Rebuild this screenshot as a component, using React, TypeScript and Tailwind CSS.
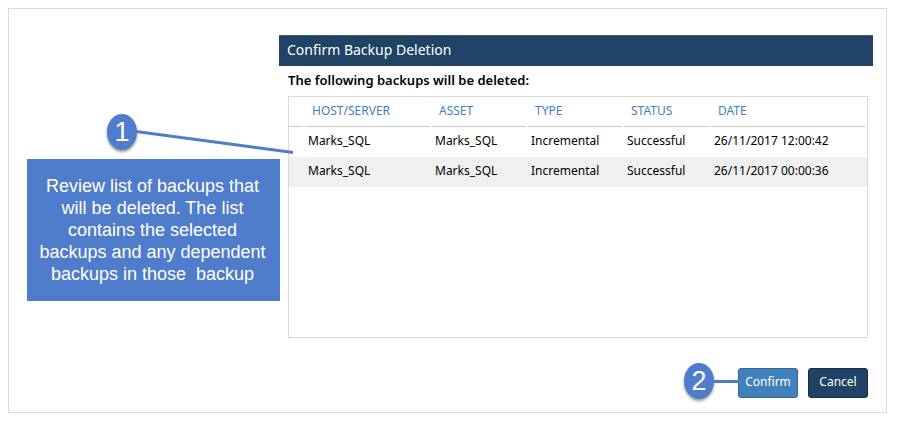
import { ReactNode } from 'react';
import clsx from 'clsx';

type Backup = {
  host: string;
  asset: string;
  type: string;
  status: string;
  date: string;
};

const backups: Backup[] = [
  { host: 'Marks_SQL', asset: 'Marks_SQL', type: 'Incremental', status: 'Successful', date: '26/11/2017 12:00:42' },
  { host: 'Marks_SQL', asset: 'Marks_SQL', type: 'Incremental', status: 'Successful', date: '26/11/2017 00:00:36' },
];

const columns = [
  { label: 'Host/Server', width: 'w-[127px]' },
  { label: 'Asset', width: 'w-24' },
  { label: 'Type', width: 'w-24' },
  { label: 'Status', width: 'w-[87px]' },
  { label: 'Date', width: '' },
];

const StepMarker = ({ children }: { children: ReactNode }) => (
  <span className="flex h-9 w-[30px] items-center justify-center rounded-[50%] bg-[#4f7dcb] font-['Liberation_Sans',sans-serif] text-[27px] leading-9 text-white shadow-[0_2px_3px_rgba(0,0,0,0.4)]">
    {children}
  </span>
);

const BackupTable = () => (
  <table className="w-full table-fixed border-collapse text-left text-xs">
    <thead>
      <tr>
        <th className="w-4 p-0">
          <div className="mr-0.5 h-[30px] border-b border-[#c9c9c9]" />
        </th>
        {columns.map((col) => (
          <th key={col.label} scope="col" className={clsx('p-0 font-normal', col.width)}>
            <div className="mr-0.5 h-[30px] border-b border-[#c9c9c9] pl-[7px] leading-7 text-[#3f80bd] uppercase">
              {col.label}
            </div>
          </th>
        ))}
      </tr>
    </thead>
    <tbody>
      {backups.map((backup) => (
        <tr key={backup.date} className="h-[30px] leading-7 text-black even:bg-[#f0f0f0]">
          <td className="p-0" />
          <td className="px-[3px] pt-0 pb-0.5">{backup.host}</td>
          <td className="px-[3px] pt-0 pb-0.5">{backup.asset}</td>
          <td className="px-[3px] pt-0 pb-0.5">{backup.type}</td>
          <td className="px-[3px] pt-0 pb-0.5">{backup.status}</td>
          <td className="px-[3px] pt-0 pb-0.5">{backup.date}</td>
        </tr>
      ))}
    </tbody>
  </table>
);

const App = () => {
  return (
    <div className="bg-white pt-2 pr-[19px] pb-5 pl-2 font-['Noto_Sans',sans-serif]">
      <div className="flex border border-[#d9d9d9] pt-[26px] pr-[13px] pb-3.5">
        {/* Step 1 note */}
        <aside className="w-[270px] shrink-0 pt-[79px] pl-[18px]">
          <div className="relative ml-20 w-[30px]">
            <svg className="absolute top-4 left-7" width="160" height="26" viewBox="0 0 160 26" aria-hidden="true">
              <path d="M1 1.5L158 22.5" stroke="#4f7dcb" strokeWidth="3" />
            </svg>
            <StepMarker>1</StepMarker>
          </div>
          <p className="mt-[9px] -mr-px bg-[#4f7dcb] py-4 pr-2.5 pl-2 text-center font-['Liberation_Sans',sans-serif] text-lg leading-[22px] text-white">
            Review list of backups that will be deleted. The list contains the selected backups and any dependent
            backups in those&nbsp; backup
          </p>
        </aside>

        <section className="min-w-0 flex-1" aria-labelledby="dialog-title">
          <h1
            id="dialog-title"
            className="h-[31px] border-t border-[#4b5a62] bg-[#204264] pl-2 text-sm leading-7 text-white"
          >
            Confirm Backup Deletion
          </h1>
          <div className="pr-[5px] pl-[9px]">
            <h2 className="h-[30px] text-[13px] leading-7 font-semibold text-black">
              The following backups will be deleted:
            </h2>
            <div className="min-h-[242px] border border-[#d9d9d9]">
              <BackupTable />
            </div>
            <div className="mt-[30px] flex items-center justify-end gap-2.5 text-xs">
              {/* Step 2 marker, its line runs onto the Confirm button */}
              <div className="relative z-10 h-[30px]">
                <div className="absolute -top-[5px] right-[-15px] flex items-center">
                  <StepMarker>2</StepMarker>
                  <span className="h-[3px] w-[29px] bg-[#4f7dcb]" />
                </div>
              </div>
              <button
                type="button"
                className="h-[30px] w-[60px] rounded-[3px] border border-[#326695] bg-[#3f80bd] pb-0.5 text-white"
              >
                Confirm
              </button>
              <button
                type="button"
                className="h-[30px] w-[60px] rounded-[3px] border border-[#152c42] bg-[#204264] pb-0.5 text-white"
              >
                Cancel
              </button>
            </div>
          </div>
        </section>
      </div>
    </div>
  );
};

export default App;
